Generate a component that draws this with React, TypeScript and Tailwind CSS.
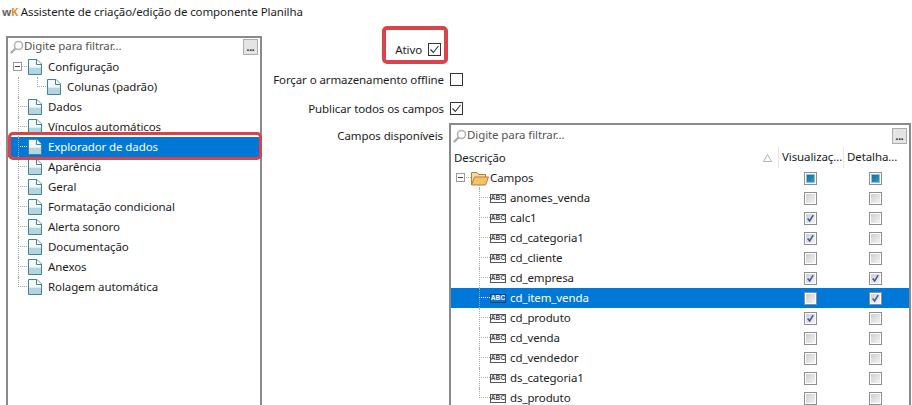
const sideItems = [
  { label: "Configuração", box: true, first: true },
  { label: "Colunas (padrão)", child: true },
  { label: "Dados" },
  { label: "Vínculos automáticos" },
  { label: "Explorador de dados", selected: true },
  { label: "Aparência" },
  { label: "Geral" },
  { label: "Formatação condicional" },
  { label: "Alerta sonoro" },
  { label: "Documentação" },
  { label: "Anexos" },
  { label: "Rolagem automática", last: true },
];

const fields: { name: string; vis?: boolean; det?: boolean; selected?: boolean }[] = [
  { name: "anomes_venda" },
  { name: "calc1", vis: true },
  { name: "cd_categoria1", vis: true },
  { name: "cd_cliente" },
  { name: "cd_empresa", vis: true, det: true },
  { name: "cd_item_venda", det: true, selected: true },
  { name: "cd_produto", vis: true },
  { name: "cd_venda" },
  { name: "cd_vendedor" },
  { name: "ds_categoria1" },
  { name: "ds_produto" },
];

function DocIcon() {
  return (
    <svg width="14" height="16" viewBox="0 0 14 16" className="shrink-0">
      <path d="M0.5 0.5H9L13.5 5V15.5H0.5Z" fill="#dcebf3" stroke="#3f8496" />
      <path d="M1 1H8.5V5.5H13V8H1Z" fill="#f4f9fb" />
      <path d="M1 9H13V15H1Z" fill="#b4d4e2" />
      <path d="M8.5 0.5V5.5H13.5" fill="#ffffff" stroke="#3f8496" />
    </svg>
  );
}

function FolderIcon() {
  return (
    <svg width="18" height="15" viewBox="0 0 18 15" className="shrink-0">
      <path d="M0.5 14V1.5H6L7.5 3.5H14.5V6" fill="#f3dca8" stroke="#b0822f" />
      <path d="M0.5 14L3.5 6H17.5L14.5 14Z" fill="#f5c26a" stroke="#b0822f" />
    </svg>
  );
}

function SearchIcon() {
  return (
    <svg width="15" height="15" viewBox="0 0 15 15" className="shrink-0">
      <circle cx="9.5" cy="5.5" r="4" fill="none" stroke="#b5b5b5" strokeWidth="1.6" />
      <path d="M6.5 8.5L1.8 13.2" stroke="#b0b0b0" strokeWidth="2.4" />
    </svg>
  );
}

function AbcIcon({ selected }: { selected?: boolean }) {
  return (
    <span
      className={`flex h-[9px] w-[16px] shrink-0 items-center justify-center border text-[6.5px] font-bold leading-none tracking-[0.2px] [font-family:'Liberation_Sans',sans-serif] ${
        selected ? "border-[#1d3f63] text-white" : "border-[#555] text-[#444]"
      }`}
    >
      ABC
    </span>
  );
}

function ExpandBox() {
  return (
    <span className="flex h-[9px] w-[9px] items-center justify-center border border-[#9a9a9a] bg-white">
      <span className="h-px w-[5px] bg-[#444]" />
    </span>
  );
}

function FilterBar() {
  return (
    <div className="flex h-5 items-center">
      <span className="ml-[1px]">
        <SearchIcon />
      </span>
      <span className="mb-[2px] text-[#555]">Digite para filtrar...</span>
      <button className="mr-[2px] ml-auto flex h-4 w-[15px] items-center justify-center border border-[#adadad] bg-[#e4e4e4] pb-[1px] text-[10px] font-bold leading-none text-[#222]">
        ...
      </button>
    </div>
  );
}

function FormCheck({ checked }: { checked?: boolean }) {
  return (
    <span className="flex h-[13px] w-[13px] shrink-0 items-center justify-center border border-[#333] bg-white">
      {checked && (
        <svg width="11" height="11" viewBox="0 0 11 11">
          <path d="M1.5 5.5L4.3 8.5L9.5 2" fill="none" stroke="#333" strokeWidth="1.1" />
        </svg>
      )}
    </span>
  );
}

function GridCheck({ checked, partial }: { checked?: boolean; partial?: boolean }) {
  return (
    <span className="flex h-[13px] w-[13px] items-center justify-center border border-[#8e8e8e] bg-white p-px">
      <span className="flex h-full w-full items-center justify-center bg-gradient-to-br from-[#d0d0d0] to-[#f2f2f2]">
        {partial && <span className="h-full w-full border border-[#8cc3dc] bg-gradient-to-br from-[#1a6e98] to-[#2f9ac4]" />}
        {checked && (
          <svg width="11" height="11" viewBox="0 0 11 11">
            <path d="M2 5.5L4.5 8.5L8.8 1.5" fill="none" stroke="#37569a" strokeWidth="1.8" />
          </svg>
        )}
      </span>
    </span>
  );
}

function SideRow({ item }: { item: (typeof sideItems)[number] }) {
  return (
    <div className={`relative flex h-5 items-center ${item.selected ? "bg-[#0078d7] text-white" : ""}`}>
      {!item.child && (
        <span className={`absolute left-[10px] top-[9px] w-[9px] border-t border-dotted ${item.selected ? "border-white" : "border-[#aaa]"}`} />
      )}
      {!item.first && (
        <span className={`absolute left-[10px] w-0 border-l border-dotted border-[#aaa] ${item.last ? "top-0 h-[10px]" : "top-0 h-5"}`} />
      )}
      {item.child && <span className="absolute left-[29px] top-0 h-[10px] w-[9px] border-b border-l border-dotted border-[#aaa]" />}
      {item.box && (
        <span className="absolute left-[5px] top-[5px]">
          <ExpandBox />
        </span>
      )}
      <span className={`flex items-center gap-[6px] ${item.child ? "ml-[39px]" : "ml-[20px]"}`}>
        <DocIcon />
        <span>{item.label}</span>
      </span>
    </div>
  );
}

function FieldRow({ field, last }: { field: (typeof fields)[number]; last: boolean }) {
  return (
    <div className={`flex h-5 items-center ${field.selected ? "bg-[#0078d7] text-white" : ""}`}>
      <div className="relative flex h-full w-[327px] items-center">
        <span className={`absolute left-[28px] top-0 w-0 border-l border-dotted border-[#aaa] ${last ? "h-[10px]" : "h-5"}`} />
        <span className={`absolute left-[28px] top-[9px] w-[11px] border-t border-dotted ${field.selected ? "border-white" : "border-[#aaa]"}`} />
        <span className="ml-[39px] mr-[4px]">
          <AbcIcon selected={field.selected} />
        </span>
        <span>{field.name}</span>
      </div>
      <div className="flex w-[65px] justify-center">
        <GridCheck checked={field.vis} />
      </div>
      <div className="flex w-[65px] justify-center">
        <GridCheck checked={field.det} />
      </div>
    </div>
  );
}

export default function App() {
  return (
    <div className="relative h-[405px] w-[912px] overflow-hidden bg-white text-[11.5px] leading-5 tracking-[-0.1px] text-[#1c1c1c] [font-family:'Noto_Sans',sans-serif]">
      <div className="flex h-[22px] items-center pl-[2px] pt-[1px]">
        <span className="mr-[3px] text-[11px] font-bold tracking-[-0.5px]">
          <span className="text-[#666]">w</span>
          <span className="text-[#e8902a]">K</span>
        </span>
        <span>Assistente de criação/edição de componente Planilha</span>
      </div>

      <div className="mt-[14px] flex">
        <div className="ml-[6px] h-[400px] w-[256px] shrink-0 border-x-2 border-t-2 border-[#8a8a8a]">
          <div className="-mt-[1px]">
            <FilterBar />
          </div>
          <div className="pr-[1px]">
            {sideItems.map((item) => (
              <SideRow key={item.label} item={item} />
            ))}
          </div>
        </div>

        <div className="-mt-[36px] min-w-0 flex-1">
          <div className="mt-[42px] flex h-[15px] items-center justify-end gap-[6px] pr-[471px]">
            <span>Ativo</span>
            <FormCheck checked />
          </div>
          <div className="mt-[15px] flex h-[15px] items-center justify-end gap-[6px] pr-[449px]">
            <span>Forçar o armazenamento offline</span>
            <FormCheck />
          </div>
          <div className="mt-[14px] flex h-[15px] items-center justify-end gap-[6px] pr-[449px]">
            <span>Publicar todos os campos</span>
            <FormCheck checked />
          </div>
          <div className="mt-[9px] flex">
            <div className="w-[181px] pt-[1px] text-right">Campos disponíveis</div>
            <div className="ml-[6px] -mt-[2px] w-[462px] shrink-0 border-x-2 border-t-2 border-[#8a8a8a]">
              <div className="pt-[1px]">
                <FilterBar />
              </div>
              <div className="mt-[1px] flex h-[21px] items-center">
                <div className="relative flex h-full w-[327px] items-center pl-[3px]">
                  <span>Descrição</span>
                  <svg width="9" height="8" viewBox="0 0 9 8" className="absolute left-[312px] top-[7px]">
                    <path d="M4.5 0.5L8.5 7.5H0.5Z" fill="none" stroke="#b5b5b5" />
                  </svg>
                </div>
                <div className="h-full w-[65px] border-l border-[#e5e5e5] pl-[3px]">Visualizaç...</div>
                <div className="h-full w-[65px] border-l border-[#e5e5e5] pl-[3px]">Detalha...</div>
              </div>
              <div className="relative flex h-5 items-center">
                <div className="relative flex h-full w-[327px] items-center">
                  <span className="absolute left-[5px] top-[5px]">
                    <ExpandBox />
                  </span>
                  <span className="absolute left-[15px] top-[9px] w-[5px] border-t border-dotted border-[#aaa]" />
                  <span className="absolute left-[28px] top-[17px] h-[3px] w-0 border-l border-dotted border-[#aaa]" />
                  <span className="ml-[20px] mr-[1px]">
                    <FolderIcon />
                  </span>
                  <span>Campos</span>
                </div>
                <div className="flex w-[65px] justify-center">
                  <GridCheck partial />
                </div>
                <div className="flex w-[65px] justify-center">
                  <GridCheck partial />
                </div>
              </div>
              {fields.map((field, i) => (
                <FieldRow key={field.name} field={field} last={i === fields.length - 1} />
              ))}
            </div>
          </div>
        </div>
      </div>

      {/* marcações vermelhas por cima do print */}
      <div className="pointer-events-none absolute left-[8px] top-[132px] h-[28px] w-[254px] rounded-[5px] border-[3px] border-[#d9434a]" />
      <div className="pointer-events-none absolute left-[382px] top-[26px] h-[38px] w-[66px] rounded-[5px] border-[4px] border-[#d9434a]" />
    </div>
  );
}
